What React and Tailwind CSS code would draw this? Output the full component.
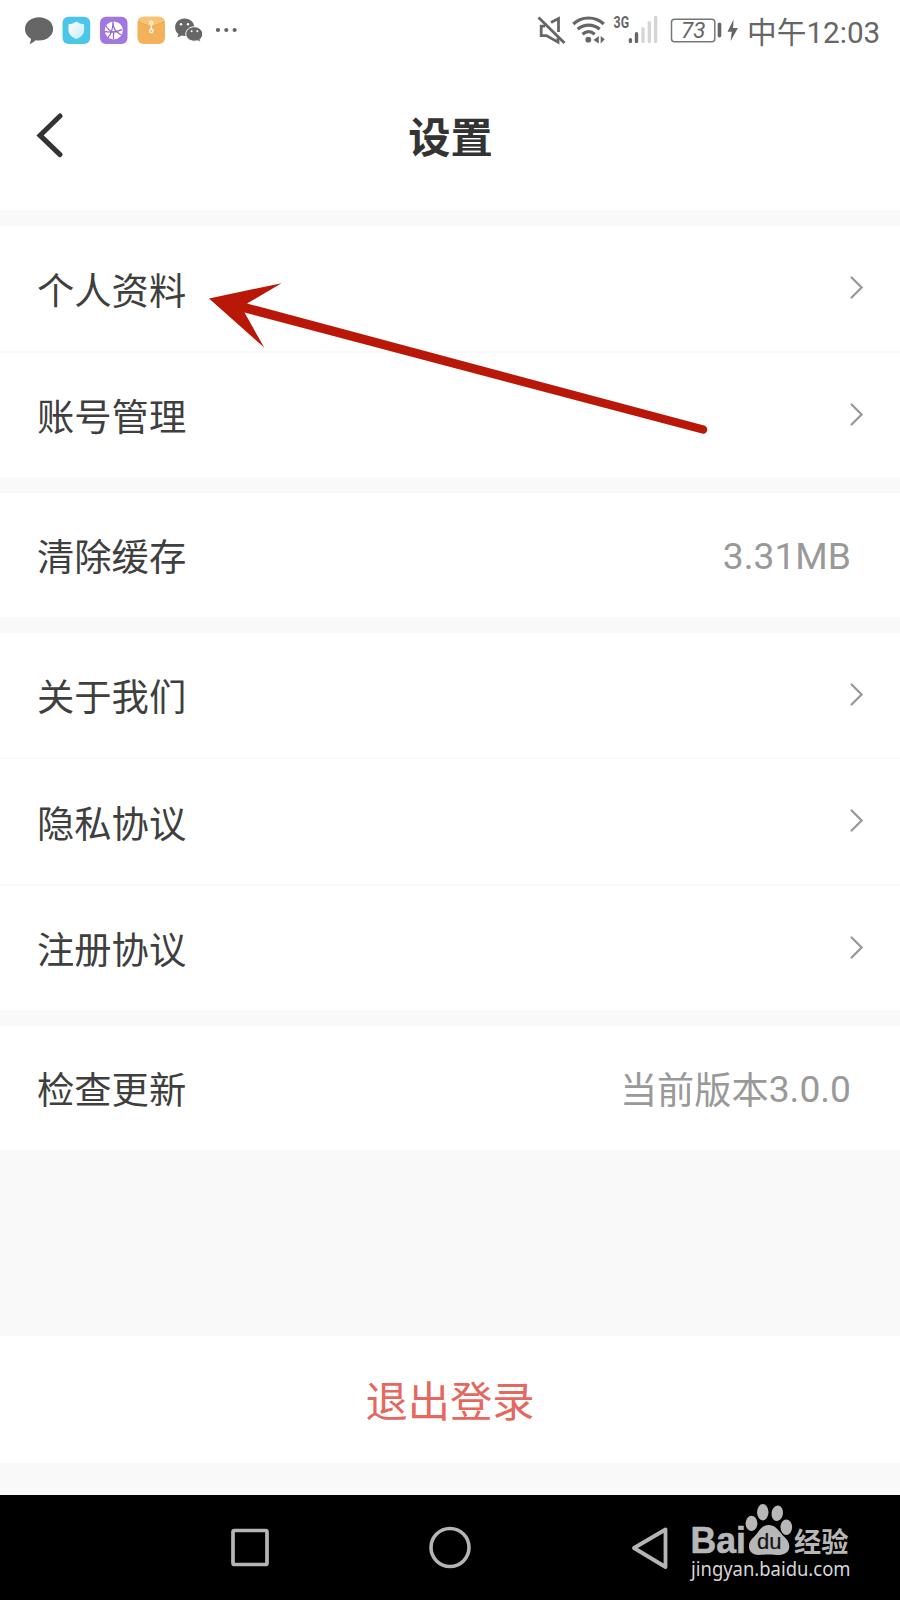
import React from "react";

const cjk = "font-['Roboto','Noto_Sans_CJK_SC',sans-serif]";

function Chevron() {
  return (
    <svg className="h-[24px] w-[14px]" viewBox="0 0 14 24" fill="none" stroke="#999999" strokeWidth="2.300">
      <path d="M1.600 1.500 L11.600 11.500 L1.600 21.500" strokeLinecap="round" />
    </svg>
  );
}

function Row({ label, value, size, last }) {
  return (
    <div className={last ? "h-[124px] bg-white" : "h-[126.500px] border-b-2 border-[#f9f9f9] bg-white"}>
      <div className="flex h-full items-center justify-between pl-[37px]">
        <span className="pt-[7px] text-[37.300px] leading-[54px] text-[#3f3f3f]">{label}</span>
        {size ? (
          <span className="flex pr-[49px] text-[37.200px] leading-[54px] text-[#999999]">
            {value && <span className="pt-[7px]">{value}</span>}
            <span className={value ? "pt-[5px]" : "pt-[2px]"}>{size}</span>
          </span>
        ) : (
          <span className="pr-[36px]"><Chevron /></span>
        )}
      </div>
    </div>
  );
}

function NotificationIcons() {
  return (
    <div className="flex h-[60px] items-center pl-[25px]">
      <svg className="h-[60px] w-[29px]" viewBox="25 0 29 60" fill="#666">
        <path d="M39 17.300c7.800 0 14.100 5 14.100 11.700S46.800 40.600 39 40.600c-1.200 0-2.400-.1-3.500-.4-1.600 1.800-3.900 3.200-6 3.700.9-1.500 1.600-3.300 1.300-5.300C27.300 36.500 25 33 25 29c0-6.700 6.200-11.700 14-11.700z" />
      </svg>
      <svg className="ml-2 h-[60px] w-[29px]" viewBox="62 0 29 60">
        <defs>
          <linearGradient id="shieldShade" x1="0" y1="0" x2="1" y2="1"><stop offset="0" stopColor="#fff" /><stop offset="1" stopColor="#c4ecf9" /></linearGradient>
        </defs>
        <rect x="62.500" y="16.800" width="27.700" height="27.200" rx="6" fill="#4cc5ea" />
        <path d="M76.400 21.500c2.200 1.700 4.700 2.500 7.700 2.700v6c0 4-3.100 6.800-7.700 8.800-4.600-2-7.900-4.800-7.900-8.800v-6c3-.2 5.700-1 7.900-2.700z" fill="url(#shieldShade)" />
      </svg>
      <svg className="ml-2 h-[60px] w-[29px]" viewBox="99 0 29 60">
        <rect x="100" y="16.800" width="27.500" height="27.200" rx="6" fill="#a177e2" />
        <circle cx="113.800" cy="30.400" r="9" fill="#fff" />
        <g fill="none" stroke="#9168cf" strokeWidth="1.200">
          <path d="M113 21.500c-.5 5.500 1.500 10 8.500 13.500M105 31.600c6 1 11.500.5 17 -2M108 37.500c3.200-3 4.800-7.500 5-16M114 31.500c-.8 2.500-.8 5-.4 7.800M105.800 26c2 3 4 4.800 6 5.800" />
        </g>
      </svg>
      <svg className="ml-2 h-[60px] w-[30px]" viewBox="136 0 30 60">
        <rect x="137.500" y="16.800" width="27.500" height="27.200" rx="6" fill="#f3b25a" />
        <path d="M138.300 21.500q1.500-4.700 5.600-4.700h15.200q4 0 5.300 4.700l-13 5.400z" fill="#f8c474" />
        <path d="M138.200 21.500l13.100 5.500 13.200-5.500" fill="none" stroke="#e3a34e" strokeWidth=".8" />
        <g fill="none" stroke="#fff0d7" strokeWidth="1.500"><circle cx="151.300" cy="22.700" r="1.500" /><circle cx="151.300" cy="31" r="1.700" /><path d="M151.300 24.200v5" /></g>
      </svg>
      <svg className="ml-2 h-[60px] w-[30px]" viewBox="174 0 30 60">
        <path d="M184.600 18.500c5.500 0 9.700 3.800 9.700 8.700 0 4.800-4.200 8.700-9.700 8.700-1 0-2-.1-3-.4l-4 2 .8-3.500c-2-1.500-3.300-4-3.300-6.800 0-4.900 4-8.700 9.500-8.700z" fill="#666" />
        <path d="M194.300 26.700c4.700 0 8.400 3.300 8.400 7.300 0 2.200-1 4-2.700 5.500l.6 2.800-3.200-1.600c-1 .3-2 .5-3.100.5-4.700 0-8.500-3.200-8.500-7.200s3.800-7.300 8.500-7.300z" fill="#666" stroke="#fff" strokeWidth="1" />
        <g fill="#fff"><circle cx="181" cy="24.200" r="1.200" /><circle cx="188" cy="24.200" r="1.200" /><circle cx="191.600" cy="31.300" r="1" /><circle cx="197.300" cy="31.300" r="1" /></g>
      </svg>
      <svg className="ml-3 h-[60px] w-[22px]" viewBox="216 0 22 60" fill="#666">
        <circle cx="218" cy="30" r="2.100" /><circle cx="226.300" cy="30" r="2.100" /><circle cx="234.600" cy="30" r="2.100" />
      </svg>
    </div>
  );
}

function SystemIcons() {
  return (
    <div className="flex h-[60px] items-center text-[#666]">
      <svg className="h-[60px] w-[29px]" viewBox="537 0 29 60" fill="none" stroke="#666" strokeWidth="2.800">
        <path d="M538.500 17.500l26 25.500" />
        <path d="M551 22.500l7.500-4v13.500M545 26.200h-3.800v9.400h5.300l11.500 6.500v-4" />
      </svg>
      <svg className="ml-1.5 h-[60px] w-[34px]" viewBox="572 0 34 60" fill="none" stroke="#666" strokeWidth="3.200">
        <path d="M573.300 24c8.500-8 22-8 30.500 0M577.700 29.200c6.200-5.500 15.700-5.500 21.900 0M582.500 34.200c3.800-3.200 8.400-3.200 12.200 0" />
        <circle cx="588.300" cy="39.700" r="2.900" fill="#666" stroke="none" />
        <path d="M598.800 36v7.500l-5.300-3.500zM600.700 36v7.500l4-4.200z" fill="#666" stroke="none" />
      </svg>
      <svg className="ml-1.5 h-[60px] w-[48px]" viewBox="612 0 48 60">
        <text x="613.600" y="27.800" textLength="15.500" lengthAdjust="spacingAndGlyphs" className="fill-[#666] font-['Roboto'] text-[16px] font-bold">3G</text>
        <g strokeWidth="3.400" strokeLinecap="round">
          <path d="M630.400 39.600v1.900M636.500 33.800v7.700" stroke="#666" />
          <path d="M643 28.600v12.900M649.300 22.700v18.800M655.600 17.500v24" stroke="#d5d5d5" />
        </g>
      </svg>
      <svg className="ml-2.5 h-[60px] w-[70px]" viewBox="670 0 70 60">
        <rect x="671.500" y="19.200" width="43.300" height="22.500" rx="3" fill="none" stroke="#777" strokeWidth="1.500" />
        <path d="M719.500 24.300v11.400" stroke="#666" strokeWidth="3.600" strokeLinecap="round" />
        <path d="M733.500 19.500l-6 12.200h4.200l-1 9.300 7.200-13h-4.800z" fill="#666" />
        <text x="681" y="37.600" textLength="24.500" lengthAdjust="spacingAndGlyphs" className="fill-[#666] font-['Roboto'] text-[22px] italic">73</text>
      </svg>
      <span className="ml-[7px] flex w-[153px] whitespace-nowrap text-[29.700px] leading-[44px]">
        <span className="pt-[6px]">中午</span>
        <span className="pt-[6px]">12:03</span>
      </span>
    </div>
  );
}

function Watermark() {
  return (
    <svg className="h-[105px] w-[170px]" viewBox="688 1495 170 105" fill="#b7b7b7">
      <text x="690.500" y="1553.300" textLength="55.500" lengthAdjust="spacingAndGlyphs" className="font-['Liberation_Sans'] text-[36px] font-bold" stroke="#b7b7b7" strokeWidth=".6">Bai</text>
      <ellipse cx="751.500" cy="1523.300" rx="5.900" ry="7.600" />
      <ellipse cx="762.800" cy="1512.300" rx="5.700" ry="8.200" />
      <ellipse cx="777.300" cy="1513.300" rx="5.700" ry="7.800" transform="rotate(8 777.300 1513.300)" />
      <ellipse cx="786.300" cy="1527.200" rx="5.800" ry="7.800" />
      <path d="M768.500 1525c6 0 9.500 4.500 12.500 8.300 3.200 4 8.300 7 8.300 13 0 5.500-4 8.600-10.300 8.600-3.500 0-6-.5-10.300-.5s-6.700.5-10.200.5c-6 0-9.500-3.300-9.500-8.700 0-6 4.700-8.500 8-12.700 3-3.800 5.500-8.500 11.500-8.500z" />
      <text x="757" y="1549.300" textLength="24.500" lengthAdjust="spacingAndGlyphs" fill="#111" stroke="#111" strokeWidth=".2" className="font-['Liberation_Sans'] text-[22px]">du</text>
      <text x="794" y="1551.500" textLength="54.500" lengthAdjust="spacingAndGlyphs" className="font-['Noto_Sans_CJK_SC'] text-[27px] font-bold">经验</text>
      <text x="691" y="1575.500" textLength="159.500" lengthAdjust="spacingAndGlyphs" fill="#d6d6d6" className="font-['Noto_Sans'] text-[19.500px]">jingyan.baidu.com</text>
    </svg>
  );
}

export default function App() {
  return (
    <div className={`relative flex h-[1600px] w-[900px] flex-col overflow-hidden bg-[#f9f9f9] ${cjk}`}>
      <div className="flex h-[60px] justify-between bg-white">
        <NotificationIcons />
        <SystemIcons />
      </div>
      <header className="grid h-[150px] grid-cols-3 items-center bg-white">
        <svg className="ml-[36px] h-[46px] w-[28px]" viewBox="36 112 28 46" fill="none" stroke="#333" strokeWidth="5">
          <path d="M60 116L40 135.400l20 19.200" strokeLinecap="round" />
        </svg>
        <h1 className="pt-[7px] pl-px text-center text-[42.300px] font-bold leading-[60px] text-[#333]">设置</h1>
      </header>
      <main className="mt-4 flex flex-col gap-4">
        <section>
          <Row label="个人资料" />
          <Row label="账号管理" last />
        </section>
        <section>
          <Row label="清除缓存" size="3.31MB" last />
        </section>
        <section>
          <Row label="关于我们" />
          <Row label="隐私协议" />
          <Row label="注册协议" last />
        </section>
        <section>
          <Row label="检查更新" value="当前版本" size="3.0.0" last />
        </section>
      </main>
      <div className="mt-auto mb-8 flex h-[127px] shrink-0 items-center justify-center bg-white">
        <button className="pt-[7px] text-[42.300px] leading-[60px] text-[#e5675e]">退出登录</button>
      </div>
      <nav className="flex h-[105px] shrink-0 items-center bg-black">
        <svg className="ml-[230px] h-[44px] w-[40px]" viewBox="0 0 40 44" fill="none" stroke="#b5b5b5" strokeWidth="3.700">
          <rect x="3" y="4.500" width="34" height="34" rx="1.500" />
        </svg>
        <svg className="ml-[158px] h-[44px] w-[44px]" viewBox="0 0 44 44" fill="none" stroke="#b5b5b5" strokeWidth="3.600">
          <circle cx="22" cy="21.500" r="19" />
        </svg>
        <svg className="ml-[158px] h-[44px] w-[40px]" viewBox="630 1525 40 44" fill="none" stroke="#b5b5b5" strokeWidth="3.800" strokeLinejoin="round">
          <path d="M634 1547L665.500 1528.500v37.500z" />
        </svg>
        <div className="ml-[18px]"><Watermark /></div>
      </nav>
      <svg className="absolute left-[200px] top-[270px] h-[180px] w-[520px]" viewBox="200 270 520 180" fill="#b91707">
        <path d="M209 298.500L281.500 283.200L247 303.500L705 425.800A4.200 4.200 0 0 1 703 433.700L244.500 312.500L264.200 347.500Z" />
      </svg>
    </div>
  );
}
